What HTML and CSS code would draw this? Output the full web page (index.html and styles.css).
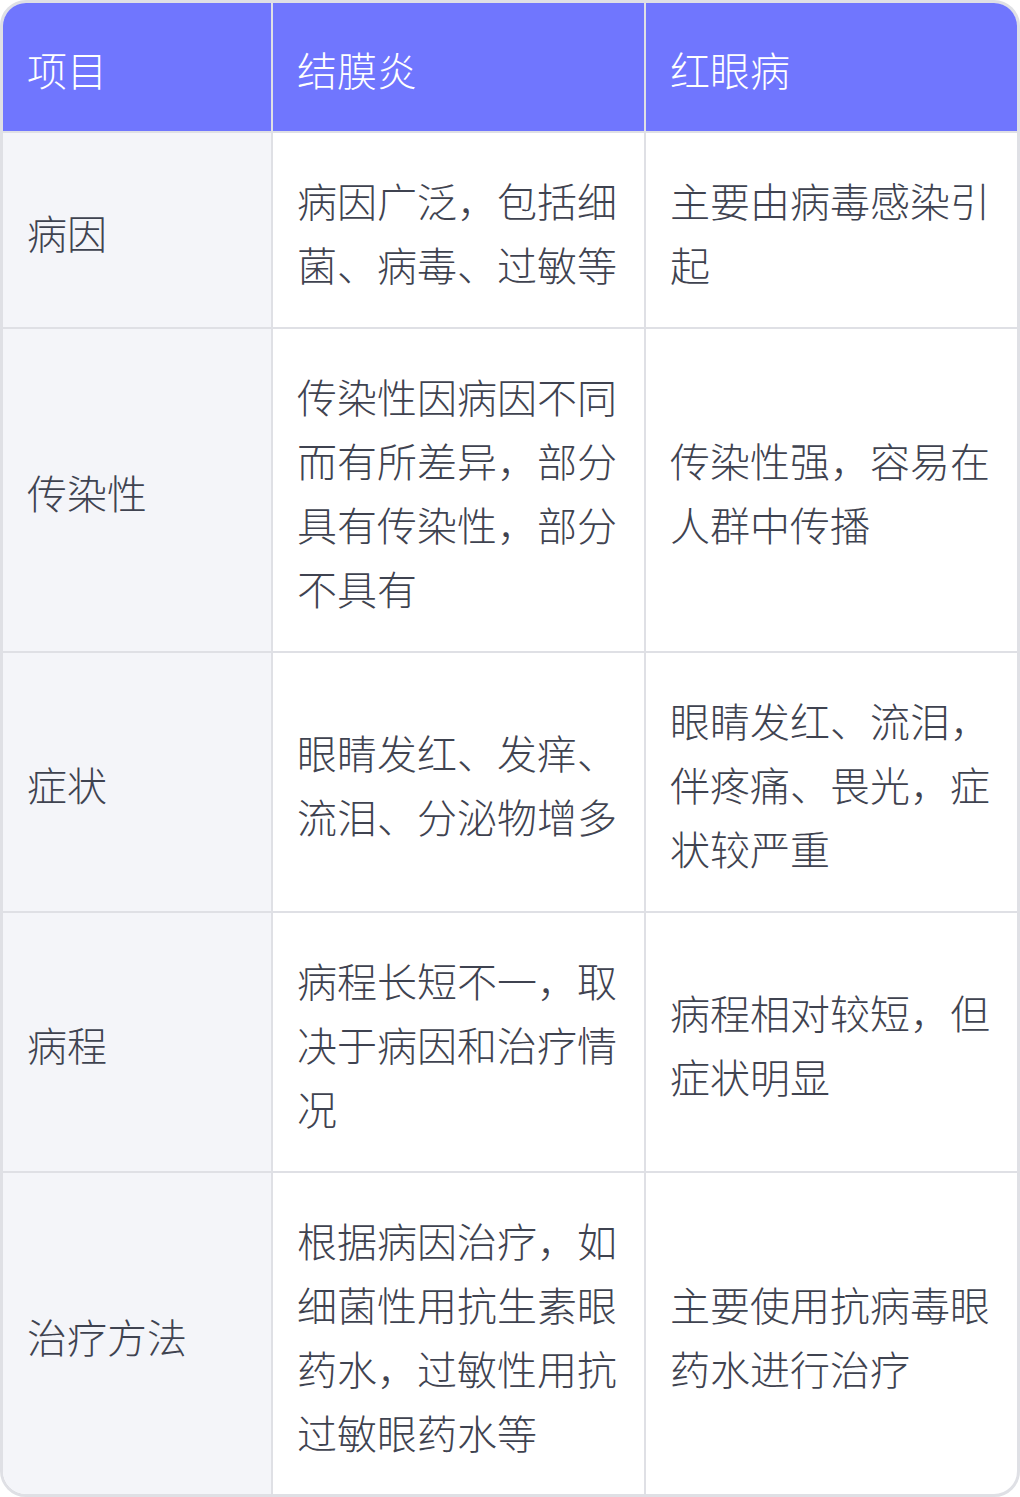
FILE: index.html
```html
<!DOCTYPE html>
<html lang="zh-CN">
<head>
<meta charset="utf-8">
<link rel="stylesheet" href="styles.css">
</head>
<body>
<div class="card">
  <div class="grid">
    <div class="cell head">项目</div>
    <div class="cell head">结膜炎</div>
    <div class="cell head last">红眼病</div>

    <div class="cell label">病因</div>
    <div class="cell">病因广泛，包括细菌、病毒、过敏等</div>
    <div class="cell last">主要由病毒感染引起</div>

    <div class="cell label">传染性</div>
    <div class="cell">传染性因病因不同而有所差异，部分具有传染性，部分不具有</div>
    <div class="cell last">传染性强，容易在人群中传播</div>

    <div class="cell label">症状</div>
    <div class="cell">眼睛发红、发痒、流泪、分泌物增多</div>
    <div class="cell last">眼睛发红、流泪，伴疼痛、畏光，症状较严重</div>

    <div class="cell label">病程</div>
    <div class="cell">病程长短不一，取决于病因和治疗情况</div>
    <div class="cell last">病程相对较短，但症状明显</div>

    <div class="cell label bottom">治疗方法</div>
    <div class="cell bottom">根据病因治疗，如细菌性用抗生素眼药水，过敏性用抗过敏眼药水等</div>
    <div class="cell last bottom">主要使用抗病毒眼药水进行治疗</div>
  </div>
</div>
</body>
</html>
```
FILE: styles.css
```css
html, body {
  margin: 0;
  padding: 0;
  background: #ffffff;
}

body {
  font-family: "Noto Sans CJK SC", "Noto Sans", sans-serif;
  font-weight: 300;
}

.card {
  width: 1020px;
  height: 1497px;
  box-sizing: border-box;
  border: 3px solid #dfe0e5;
  border-radius: 26px;
  overflow: hidden;
  background: #ffffff;
}

.grid {
  display: grid;
  grid-template-columns: 270px 373px 371px;
}

.cell {
  box-sizing: border-box;
  padding: 35px 25px 31px 24px;
  font-size: 40px;
  line-height: 64px;
  color: #3f4350;
  border-right: 2px solid #dfe0e5;
  border-bottom: 2px solid #dfe0e5;
  display: flex;
  align-items: center;
  word-break: break-all;
  line-break: strict;
}

.cell.last {
  border-right: none;
}

.cell.bottom {
  border-bottom: none;
}

.cell.head {
  background: #7076fe;
  color: #ffffff;
  padding-top: 34px;
  padding-bottom: 30px;
}

.cell.label {
  background: #f4f5f9;
}
```
